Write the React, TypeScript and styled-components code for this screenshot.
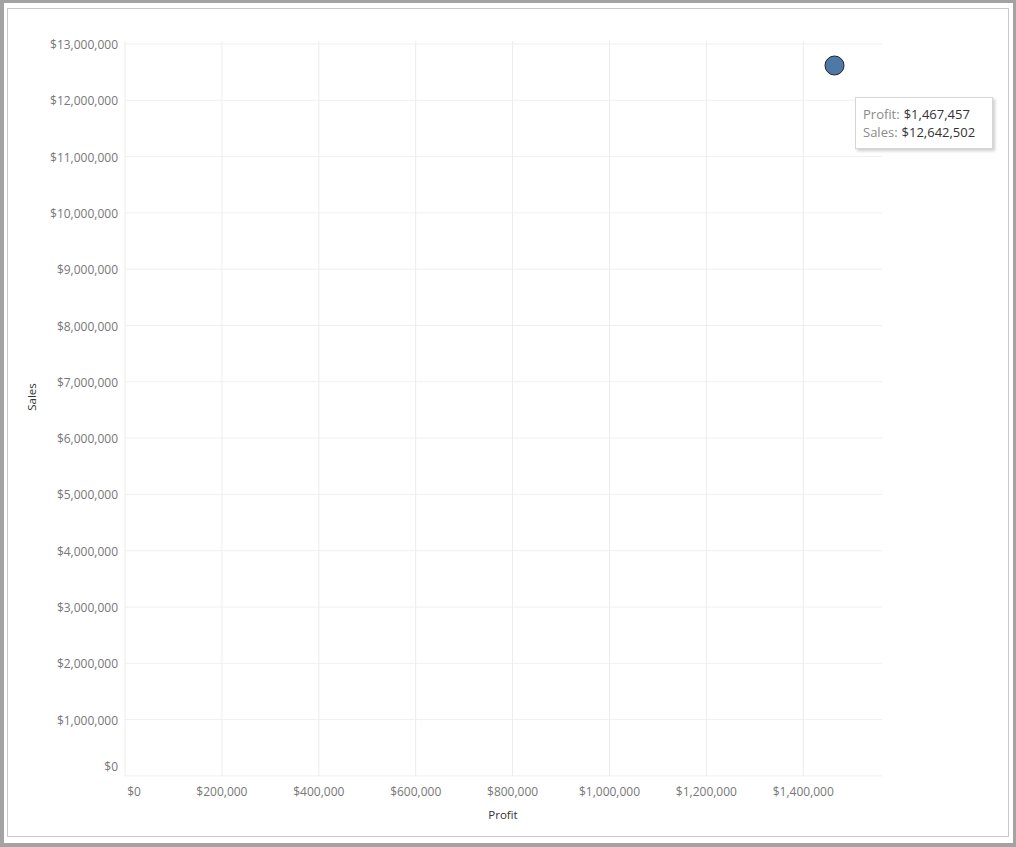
import React from "react";
import styled, { createGlobalStyle } from "styled-components";

const Global = createGlobalStyle`
  html, body { margin: 0; background: #a3a3a3; }
  body { font-family: "Open Sans", "Liberation Sans", sans-serif; }
`;

const Frame = styled.div`
  position: relative;
  margin: 3px 3px 4px 4px;
  height: 840px;
  background: #fff;
  padding: 5px 4px 1px 3px;
  box-sizing: border-box;
`;

const Panel = styled.div`
  border: 1px solid #c9c9c9;
  height: 829px;
  box-sizing: border-box;
`;

const Tooltip = styled.div`
  position: absolute;
  left: 851px;
  top: 94px;
  width: 138px;
  padding: 7px 0 7px 7px;
  box-sizing: border-box;
  background: #fff;
  border: 1px solid #d6d6d6;
  box-shadow: 2px 2px 3px rgba(0, 0, 0, 0.2);
  font-size: 13px;
  line-height: 18px;
  color: #333;
`;

const Key = styled.span`
  color: #8a8a8a;
  margin-right: 4px;
`;

const yTicks = Array.from({ length: 14 }, (_, i) => i);
const xTicks = Array.from({ length: 8 }, (_, i) => i);
const yPos = (m: number) => 43 + (13 - m) * 56.3;
const xPos = (k: number) => 126 + k * 96.9;
const money = (n: number) => "$" + n.toLocaleString("en-US");

const Chart = () => (
  <svg width="998" height="827" viewBox="9 8 998 827" style={{ display: "block" }}>
    {yTicks.map((m) => (
      <line key={"h" + m} x1={126} x2={883} y1={yPos(m)} y2={yPos(m)} stroke="#f0f0f0" />
    ))}
    {xTicks.map((k) => (
      <line key={"v" + k} x1={xPos(k)} x2={xPos(k)} y1={40} y2={775} stroke="#ececec" />
    ))}
    <g fontFamily="Open Sans, Liberation Sans, sans-serif" fontSize="12" fill="#777">
      {yTicks.map((m) => (
        <text key={"yl" + m} x={119} y={(m === 0 ? 766 : yPos(m) + 1) + 4} textAnchor="end">
          {money(m * 1000000)}
        </text>
      ))}
      {xTicks.map((k) => (
        <text key={"xl" + k} x={k === 0 ? 135 : xPos(k)} y={795} textAnchor="middle">
          {money(k * 200000)}
        </text>
      ))}
    </g>
    <text x={504} y={818} textAnchor="middle" fontSize="11.5" fill="#333" fontFamily="Open Sans, sans-serif">
      Profit
    </text>
    <text
      transform="translate(37 396) rotate(-90)"
      textAnchor="middle"
      fontSize="11.5"
      fill="#333"
      fontFamily="Open Sans, sans-serif"
    >
      Sales
    </text>
    <circle cx={835.5} cy={64.5} r={9.5} fill="#4e79a7" stroke="#222" strokeWidth={1} />
  </svg>
);

export default function App() {
  return (
    <>
      <Global />
      <Frame>
        <Panel>
          <Chart />
        </Panel>
        <Tooltip>
          <div>
            <Key>Profit:</Key>$1,467,457
          </div>
          <div>
            <Key>Sales:</Key>$12,642,502
          </div>
        </Tooltip>
      </Frame>
    </>
  );
}
